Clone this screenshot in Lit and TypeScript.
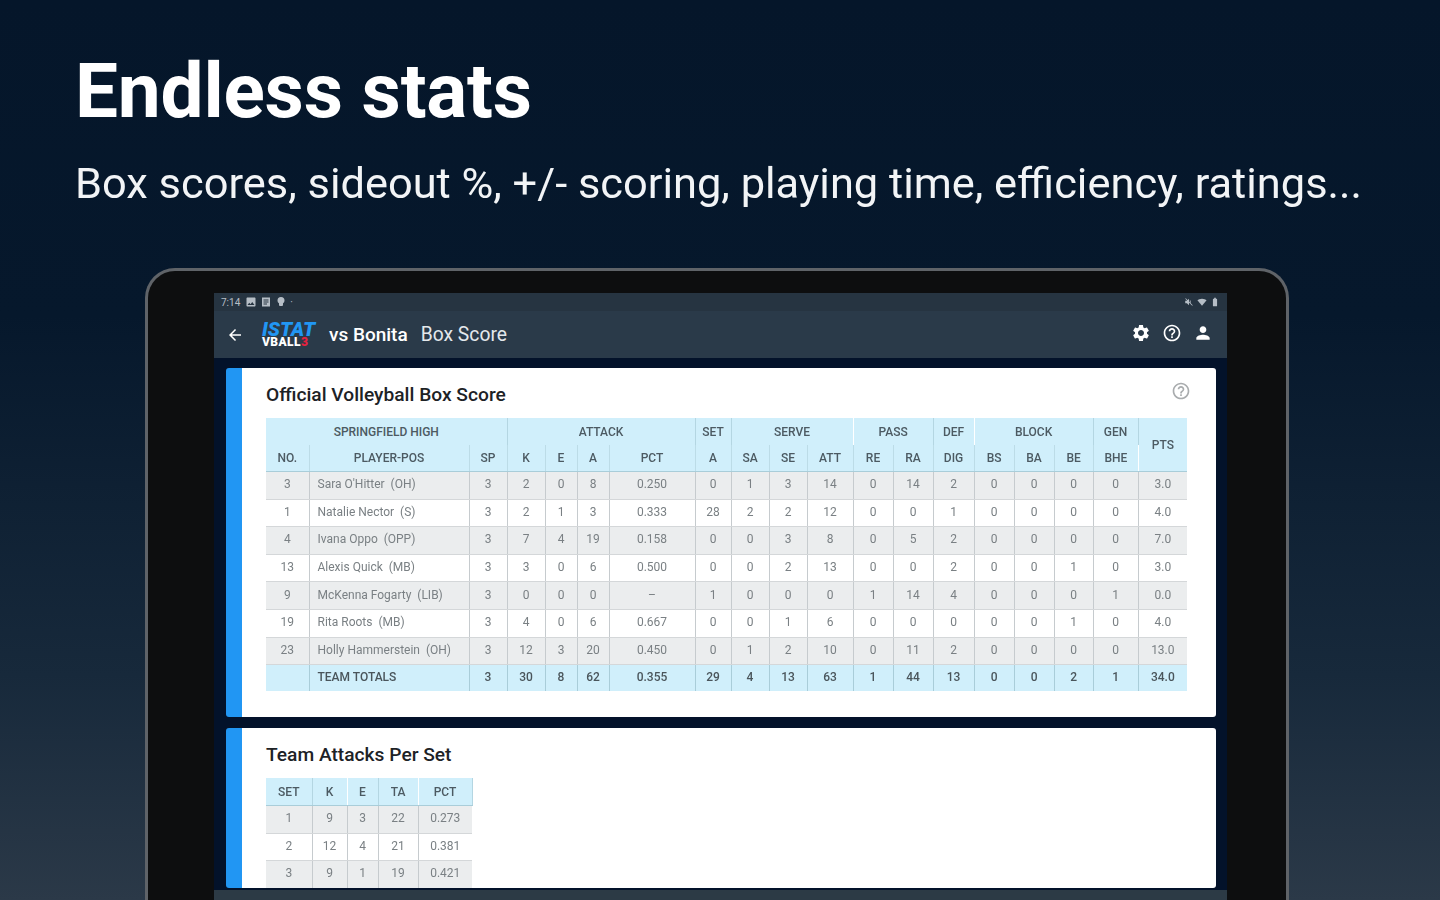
import { LitElement, html, css, svg } from 'lit';
import { customElement } from 'lit/decorators.js';

const BOX_COLS = [43, 160, 38, 38, 32, 32, 86, 36, 38, 38, 46, 40, 40, 41, 40, 40, 39, 45, 49];
const SET_COLS = [46, 35, 31, 40, 54];

const PLAYERS = [
  ['3', "Sara O'Hitter  (OH)", '3', '2', '0', '8', '0.250', '0', '1', '3', '14', '0', '14', '2', '0', '0', '0', '0', '3.0'],
  ['1', 'Natalie Nector  (S)', '3', '2', '1', '3', '0.333', '28', '2', '2', '12', '0', '0', '1', '0', '0', '0', '0', '4.0'],
  ['4', 'Ivana Oppo  (OPP)', '3', '7', '4', '19', '0.158', '0', '0', '3', '8', '0', '5', '2', '0', '0', '0', '0', '7.0'],
  ['13', 'Alexis Quick  (MB)', '3', '3', '0', '6', '0.500', '0', '0', '2', '13', '0', '0', '2', '0', '0', '1', '0', '3.0'],
  ['9', 'McKenna Fogarty  (LIB)', '3', '0', '0', '0', '–', '1', '0', '0', '0', '1', '14', '4', '0', '0', '0', '1', '0.0'],
  ['19', 'Rita Roots  (MB)', '3', '4', '0', '6', '0.667', '0', '0', '1', '6', '0', '0', '0', '0', '0', '1', '0', '4.0'],
  ['23', 'Holly Hammerstein  (OH)', '3', '12', '3', '20', '0.450', '0', '1', '2', '10', '0', '11', '2', '0', '0', '0', '0', '13.0'],
];
const TOTALS = ['', 'TEAM TOTALS', '3', '30', '8', '62', '0.355', '29', '4', '13', '63', '1', '44', '13', '0', '0', '2', '1', '34.0'];
const LABELS = ['NO.', 'PLAYER-POS', 'SP', 'K', 'E', 'A', 'PCT', 'A', 'SA', 'SE', 'ATT', 'RE', 'RA', 'DIG', 'BS', 'BA', 'BE', 'BHE'];
// third value: group has no divider on its right edge
const GROUPS: [string, number, boolean][] = [
  ['SPRINGFIELD HIGH', 3, false], ['ATTACK', 4, false], ['SET', 1, false], ['SERVE', 3, true],
  ['PASS', 2, false], ['DEF', 1, true], ['BLOCK', 3, false], ['GEN', 1, false],
];
const SET_LABELS: [string, boolean][] = [['SET', false], ['K', true], ['E', false], ['TA', true], ['PCT', false]];
const SETS = [
  ['1', '9', '3', '22', '0.273'],
  ['2', '12', '4', '21', '0.381'],
  ['3', '9', '1', '19', '0.421'],
];

const icon = (d: string, size: number) => html`<svg width=${size} height=${size} viewBox="0 0 24 24" fill="currentColor">${svg`<path d=${d}></path>`}</svg>`;

const GEAR = 'M19.14 12.94c.04-.3.06-.61.06-.94 0-.32-.02-.64-.07-.94l2.03-1.58c.18-.14.23-.41.12-.61l-1.92-3.32c-.12-.22-.37-.29-.59-.22l-2.39.96c-.5-.38-1.03-.7-1.62-.94l-.36-2.54c-.04-.24-.24-.41-.48-.41h-3.84c-.24 0-.43.17-.47.41l-.36 2.54c-.59.24-1.13.57-1.62.94l-2.39-.96c-.22-.08-.47 0-.59.22L2.74 8.87c-.12.21-.08.47.12.61l2.03 1.58c-.05.3-.09.63-.09.94s.02.64.07.94l-2.03 1.58c-.18.14-.23.41-.12.61l1.92 3.32c.12.22.37.29.59.22l2.39-.96c.5.38 1.03.7 1.62.94l.36 2.54c.05.24.24.41.48.41h3.84c.24 0 .44-.17.47-.41l.36-2.54c.59-.24 1.13-.56 1.62-.94l2.39.96c.22.08.47 0 .59-.22l1.92-3.32c.12-.22.07-.47-.12-.61l-2.01-1.58zM12 15.6c-1.98 0-3.6-1.62-3.6-3.6s1.62-3.6 3.6-3.6 3.6 1.62 3.6 3.6-1.62 3.6-3.6 3.6z';
const HELP = 'M11 18h2v-2h-2v2zm1-16C6.48 2 2 6.48 2 12s4.48 10 10 10 10-4.48 10-10S17.52 2 12 2zm0 18c-4.41 0-8-3.59-8-8s3.59-8 8-8 8 3.59 8 8-3.59 8-8 8zm0-14c-2.21 0-4 1.79-4 4h2c0-1.1.9-2 2-2s2 .9 2 2c0 2-3 1.75-3 5h2c0-2.25 3-2.5 3-5 0-2.21-1.79-4-4-4z';
const PERSON = 'M12 12c2.21 0 4-1.79 4-4s-1.79-4-4-4-4 1.79-4 4 1.79 4 4 4zm0 2c-2.67 0-8 1.34-8 4v2h16v-2c0-2.66-5.33-4-8-4z';
const BACK = 'M20 11H7.83l5.59-5.59L12 4l-8 8 8 8 1.41-1.41L7.83 13H20v-2z';
const IMAGE = 'M21 19V5c0-1.1-.9-2-2-2H5c-1.1 0-2 .9-2 2v14c0 1.1.9 2 2 2h14c1.1 0 2-.9 2-2zM8.5 13.5l2.5 3 3.5-4.5 4.5 6H5l3.5-4.5z';
const SHIELD = 'M4 3h16v18H4zM7 7v2h10V7zm0 4v2h10v-2zm0 4v2h7v-2z';
const ANDROID = 'M12 2a7 7 0 0 0-7 7c0 2.4 1.2 4.5 3 5.7V18a2 2 0 0 0 2 2h4a2 2 0 0 0 2-2v-3.3c1.8-1.2 3-3.3 3-5.7a7 7 0 0 0-7-7z';
const MUTE = 'M3 9v6h4l5 5V4L7 9H3zm13 .2v5.6l-2-2V7.2zM4.3 3 3 4.3 19.7 21l1.3-1.3z';
const WIFI = 'M12 4C7.3 4 3.4 5.7 1 8l11 13L23 8c-2.4-2.3-6.3-4-11-4z';
const BATTERY = 'M15.7 4H14V2h-4v2H8.3C7.6 4 7 4.6 7 5.3v15.4c0 .7.6 1.3 1.3 1.3h7.4c.7 0 1.3-.6 1.3-1.3V5.3c0-.7-.6-1.3-1.3-1.3z';

@customElement('app-root')
export class AppRoot extends LitElement {
  static styles = css`
    :host {
      display: block;
      width: 1440px;
      height: 900px;
      overflow: hidden;
      background: linear-gradient(180deg, #05162a 0%, #06182c 35%, #17293b 75%, #2b3948 100%);
      font-family: Roboto, "Liberation Sans", sans-serif;
    }
    .hero {
      padding: 50px 0 0 75px;
      height: 268px;
      box-sizing: border-box;
      color: #fff;
      filter: blur(0.4px);
    }
    h1 {
      margin: 0;
      font-size: 76.5px;
      line-height: 82px;
      font-weight: 700;
      letter-spacing: -0.2px;
    }
    .sub {
      margin-top: 26px;
      font-size: 43.4px;
      line-height: 52px;
      font-weight: 400;
      color: #f2f4f6;
      white-space: nowrap;
    }
    .tablet {
      box-sizing: border-box;
      margin-left: 145px;
      width: 1144px;
      height: 650px;
      background: #0d0e0f;
      border: 3px solid #5f6368;
      border-bottom: 0;
      border-radius: 30px 30px 0 0;
      padding: 22px 58px 0 66px;
      filter: blur(0.3px);
    }
    .screen {
      width: 1013px;
      height: 610px;
      background: #03122a;
      filter: blur(0.5px);
      overflow: hidden;
      display: flex;
      flex-direction: column;
    }
    .status {
      height: 18px;
      flex: none;
      background: #263441;
      color: #b6bec6;
      display: flex;
      align-items: center;
      padding: 0 7px;
      gap: 3px;
      font-size: 10px;
    }
    .status .time { margin-right: 2px; }
    .status .spacer { flex: 1; }
    .toolbar {
      height: 47px;
      flex: none;
      box-sizing: border-box;
      background: #2a3a49;
      color: #fff;
      display: flex;
      align-items: center;
      padding: 0 14px 0 12px;
    }
    .logo {
      margin-left: 18px;
      width: 58px;
      display: flex;
      flex-direction: column;
      line-height: 1;
    }
    .logo .top {
      font-size: 20px;
      line-height: 15px;
      font-weight: 900;
      font-style: italic;
      color: #2196f3;
    }
    .logo .bottom {
      font-size: 12px;
      line-height: 11px;
      font-weight: 900;
      color: #fff;
      letter-spacing: 0.4px;
    }
    .logo .bottom b { color: #e8213f; }
    .vs {
      margin-left: 9px;
      font-size: 19px;
      font-weight: 500;
    }
    .page {
      margin-left: 13px;
      font-size: 19.3px;
      color: #e4e8ec;
    }
    .actions {
      margin-left: auto;
      margin-bottom: 3px;
      display: flex;
      align-items: center;
      gap: 11px;
    }
    .content {
      flex: 1;
      min-height: 0;
      padding: 10px 11px 0 12px;
      display: flex;
      flex-direction: column;
      gap: 11px;
    }
    .navbar {
      height: 13px;
      flex: none;
      background: #2c3a45;
    }
    .card {
      flex: none;
      box-sizing: border-box;
      position: relative;
      overflow: hidden;
      background: #fff;
      border-left: 16px solid #2196f3;
      border-radius: 3px;
      padding: 14px 29px 0 24px;
    }
    .card.box { height: 349px; }
    .card.sets { height: 160px; }
    h2 {
      margin: 0 0 11px;
      font-size: 19.2px;
      line-height: 25px;
      font-weight: 500;
      color: #1d2226;
    }
    .hint {
      position: absolute;
      top: 13px;
      right: 25px;
      color: #a9acae;
    }
    table {
      border-collapse: collapse;
      table-layout: fixed;
      font-size: 12px;
      color: #7a8084;
      filter: blur(0.6px);
    }
    th, td {
      padding: 0;
      text-align: center;
      font-weight: 400;
      white-space: pre;
      overflow: hidden;
    }
    th {
      background: #d0effb;
      color: #4c5a62;
      font-weight: 500;
      border-bottom: 1px solid #a9cdd9;
    }
    .groups th {
      height: 27px;
      border-bottom: 0;
      border-right: 1px solid #b4d6e2;
    }
    .groups th.open { border-right-color: transparent; }
    .labels th {
      height: 26px;
      border-right: 1px solid #bcdce7;
    }
    th.pts { border-bottom: 1px solid #a9cdd9; }
    td {
      padding-bottom: 2px;
      box-sizing: border-box;
      border-right: 1px solid #c6cbce;
      border-bottom: 1px solid #d4d7d9;
    }
    .box-table td, .set-table td { height: 27.6px; }
    tr > :last-child { border-right: 0; }
    tbody tr:nth-child(odd) td { background: #ebedee; }
    tbody tr:nth-child(even) td { background: #fff; }
    td.name {
      text-align: left;
      padding-left: 8px;
    }
    tbody tr.total td {
      background: #d0effb;
      color: #4a555b;
      font-weight: 500;
      border-right-color: #a9cdd9;
      border-bottom: 0;
      height: 26px;
    }
    .set-table th { height: 27px; border-right: 1px solid #b4d6e2; }
    .set-table th.open { border-right-color: transparent; }
  `;

  private renderBox() {
    return html`<table class="box-table" style="width:921px">
      <colgroup>${BOX_COLS.map((w) => html`<col style="width:${w}px" />`)}</colgroup>
      <thead>
        <tr class="groups">
          ${GROUPS.map(([g, n, open]) => html`<th colspan=${n} class=${open ? 'open' : ''}>${g}</th>`)}
          <th class="pts" rowspan="2">PTS</th>
        </tr>
        <tr class="labels">${LABELS.map((l) => html`<th>${l}</th>`)}</tr>
      </thead>
      <tbody>
        ${PLAYERS.map((p) => html`<tr>${p.map((c, i) => html`<td class=${i === 1 ? 'name' : ''}>${c}</td>`)}</tr>`)}
        <tr class="total">${TOTALS.map((c, i) => html`<td class=${i === 1 ? 'name' : ''}>${c}</td>`)}</tr>
      </tbody>
    </table>`;
  }

  private renderSets() {
    return html`<table class="set-table" style="width:206px">
      <colgroup>${SET_COLS.map((w) => html`<col style="width:${w}px" />`)}</colgroup>
      <thead>
        <tr>${SET_LABELS.map(([l, open]) => html`<th class=${open ? 'open' : ''}>${l}</th>`)}</tr>
      </thead>
      <tbody>
        ${SETS.map((r) => html`<tr>${r.map((c) => html`<td>${c}</td>`)}</tr>`)}
      </tbody>
    </table>`;
  }

  render() {
    return html`
      <section class="hero">
        <h1>Endless stats</h1>
        <div class="sub">Box scores, sideout %, +/- scoring, playing time, efficiency, ratings...</div>
      </section>
      <div class="tablet">
        <div class="screen">
          <div class="status">
            <span class="time">7:14</span>
            ${icon(IMAGE, 12)}${icon(SHIELD, 12)}${icon(ANDROID, 12)}
            <span>·</span>
            <span class="spacer"></span>
            ${icon(MUTE, 10)}${icon(WIFI, 10)}${icon(BATTERY, 10)}
          </div>
          <div class="toolbar">
            ${icon(BACK, 18)}
            <div class="logo">
              <span class="top">ISTAT</span>
              <span class="bottom">VBALL<b>3</b></span>
            </div>
            <span class="vs">vs Bonita</span>
            <span class="page">Box Score</span>
            <div class="actions">${icon(GEAR, 20)}${icon(HELP, 20)}${icon(PERSON, 20)}</div>
          </div>
          <div class="content">
            <div class="card box">
              <h2>Official Volleyball Box Score</h2>
              <span class="hint">${icon(HELP, 20)}</span>
              ${this.renderBox()}
            </div>
            <div class="card sets">
              <h2>Team Attacks Per Set</h2>
              ${this.renderSets()}
            </div>
          </div>
          <div class="navbar"></div>
        </div>
      </div>
    `;
  }
}
